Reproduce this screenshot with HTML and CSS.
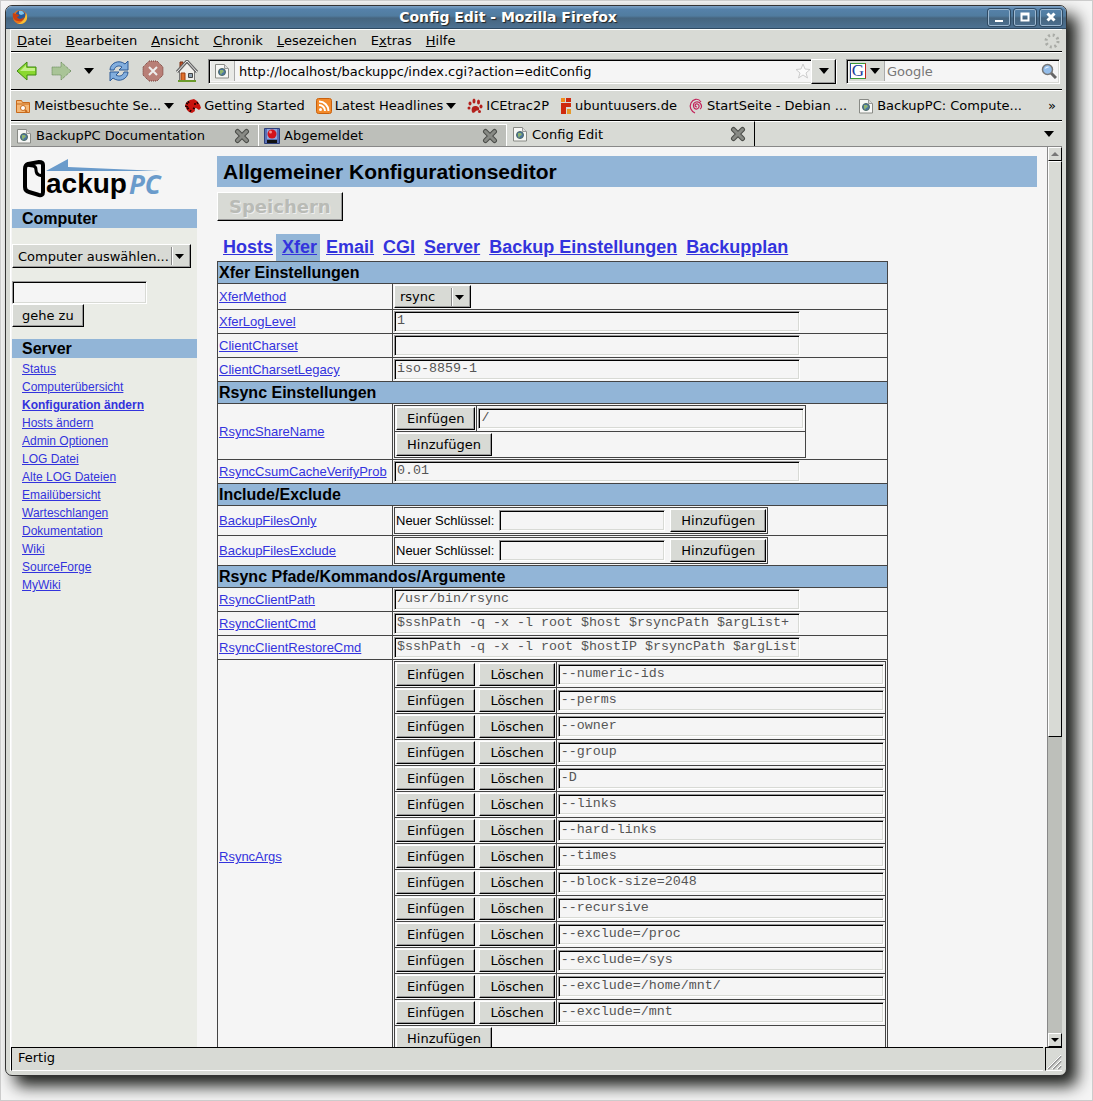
FILE: index.html
```html
<!DOCTYPE html>
<html lang="de">
<head>
  <meta charset="UTF-8">
  <meta name="viewport" content="width=device-width, initial-scale=1.0">
  <title>Config Edit</title>
  <link rel="stylesheet" href="styles.css">
</head>
<body>
  <!-- Shared icons -->
  <svg class="defs" aria-hidden="true">
    <symbol id="page" viewBox="0 0 16 16">
      <path d="M1.500 1.500h9l4 4v9.500h-13z" fill="#f7f7f5" stroke="#888a85"/>
      <path d="M10.500 1.500v4h4" fill="#ddd" stroke="#999"/>
      <circle cx="8" cy="9" r="3.500" fill="#4b75a8" stroke="#4e6b62"/>
      <path d="M6 7l3 0 1 2-2 1-1 2-1-2z" fill="#8fb56e"/>
    </symbol>
    <symbol id="close" viewBox="0 0 16 16">
      <path d="M3.500 3.500l9 9M12.500 3.500l-9 9" stroke="#4b4d49" stroke-width="5" stroke-linecap="round"/>
      <path d="M3.500 3.500l9 9M12.500 3.500l-9 9" stroke="#888a85" stroke-width="3" stroke-linecap="round"/>
    </symbol>
    <symbol id="down" viewBox="0 0 10 6">
      <path d="M0 0h10L5 6z" fill="#000"/>
    </symbol>
  </svg>

  <div class="window">
    <header class="titlebar">
      <svg class="icon" viewBox="0 0 16 16">
        <circle cx="8" cy="8" r="7" fill="#e8731c"/>
        <circle cx="8.500" cy="6.500" r="5" fill="#24599c"/>
        <path d="M7 2c3-1 5 1 5 3l-3 1-2-1z" fill="#7fc4ea"/>
        <path d="M1 4c1 0 2 1 3 1 2 0 3 1 3 2l-2 1c1 2 4 3 7 0 0 3-3 5-6 4C2 12 0 8 1 4z" fill="#c9400f"/>
        <path d="M14 4c1 2 2 5 0 8-2 3-6 4-9 2 4 1 8-3 9-10z" fill="#f8bf35"/>
      </svg>
      <h1>Config Edit - Mozilla Firefox</h1>
      <button class="win-btn" aria-label="Minimieren"><svg viewBox="0 0 16 12"><path d="M4 9h8v2H4z" fill="#fff"/></svg></button>
      <button class="win-btn" aria-label="Maximieren"><svg viewBox="0 0 16 12"><path d="M4.500 2.500h7v7h-7zM4 3.500h8" fill="none" stroke="#fff" stroke-width="2"/></svg></button>
      <button class="win-btn" aria-label="Schließen"><svg viewBox="0 0 16 12"><path d="M4.500 2.500l7 7M11.500 2.500l-7 7" stroke="#fff" stroke-width="3"/></svg></button>
    </header>

    <div class="chrome">
      <nav class="menubar">
        <a href="#"><u>D</u>atei</a>
        <a href="#"><u>B</u>earbeiten</a>
        <a href="#"><u>A</u>nsicht</a>
        <a href="#"><u>C</u>hronik</a>
        <a href="#"><u>L</u>esezeichen</a>
        <a href="#">E<u>x</u>tras</a>
        <a href="#"><u>H</u>ilfe</a>
        <svg class="throbber" viewBox="0 0 16 16"><circle cx="8" cy="8" r="6" fill="none" stroke="#a9aba6" stroke-width="3" stroke-dasharray="2 2.710"/></svg>
      </nav>

      <div class="toolbar">
        <button class="tool" aria-label="Zurück">
          <svg viewBox="0 0 22 22"><path d="M1 11L11 2v5h9v8h-9v5z" fill="#8ad82f" stroke="#3f8a10"/><path d="M4 11l6-6v3h9v3z" fill="#c5f08a"/></svg>
        </button>
        <button class="tool" aria-label="Vor">
          <svg viewBox="0 0 22 22"><path d="M21 11L11 2v5H2v8h9v5z" fill="#a9c497" stroke="#5f8250" stroke-dasharray="1 1"/></svg>
        </button>
        <button class="tool tool-menu" aria-label="Verlauf"><svg class="arrow"><use href="#down"/></svg></button>
        <button class="tool" aria-label="Neu laden">
          <svg viewBox="0 0 22 22">
            <path d="M2 10C2 3 11-1 17 4l3-3v9h-9l3-3C11 5 7 6 6 10z" fill="#82aede" stroke="#2c5a96"/>
            <path d="M20 12c0 7-9 11-15 6l-3 3v-9h9l-3 3c3 2 7 1 8-3z" fill="#82aede" stroke="#2c5a96"/>
          </svg>
        </button>
        <button class="tool" aria-label="Stopp">
          <svg viewBox="0 0 22 22"><path d="M7 1h8l6 6v8l-6 6H7l-6-6V7z" fill="#b87f77" stroke="#703a34" stroke-dasharray="1 1"/><path d="M7 7l8 8M15 7l-8 8" stroke="#eee" stroke-width="2"/></svg>
        </button>
        <button class="tool" aria-label="Startseite">
          <svg viewBox="0 0 22 22">
            <path d="M4 2h3v7H4z" fill="#c0522a" stroke="#7d3518"/>
            <path d="M3.500 11v9.500h15V11L11 3z" fill="#f0efeb" stroke="#777"/>
            <path d="M1 12L11 1l10 11" fill="none" stroke="#666" stroke-width="3"/>
            <path d="M1 12L11 1l10 11" fill="none" stroke="#eee"/>
            <path d="M5 13h4v8H5z" fill="#e0702a" stroke="#9c3d10"/>
            <path d="M12.500 13.500h4v4h-4z" fill="#91a5b5" stroke="#444"/>
            <path d="M2 21h18" stroke="#6b9a2c" stroke-width="2"/>
          </svg>
        </button>
        <div class="urlbar">
          <span class="site-icon"><svg class="icon"><use href="#page"/></svg></span>
          <input type="text" aria-label="Adresse" value="http://localhost/backuppc/index.cgi?action=editConfig">
          <svg class="icon" viewBox="0 0 16 16"><path d="M8 1l2 5 5 .5-4 3.500 1.500 5L8 12l-4.500 3L5 10 1 6.500 6 6z" fill="#fafafa" stroke="#ccc"/></svg>
          <button class="url-drop" aria-label="Adressen anzeigen"><svg class="arrow"><use href="#down"/></svg></button>
        </div>
        <div class="searchbar">
          <button class="engine" aria-label="Suchmaschine">
            <span class="g-logo">G</span>
            <svg class="arrow"><use href="#down"/></svg>
          </button>
          <input type="text" aria-label="Suche" placeholder="Google">
          <svg class="icon" viewBox="0 0 16 16"><path d="M10 10l5 5" stroke="#666" stroke-width="3"/><circle cx="6.500" cy="6.500" r="5" fill="#93bdea" stroke="#777" stroke-width="1.500"/><path d="M3.500 6c1-3 4-3 5-2z" fill="#e6f2ff"/></svg>
        </div>
      </div>

      <nav class="bookmarks">
        <a href="#">
          <svg class="icon" viewBox="0 0 16 16"><path d="M1.500 2.500h5l1 2h7v10h-13z" fill="#f4b877" stroke="#c96a1b"/><path d="M1 6h14" stroke="#c96a1b"/><circle cx="8" cy="10" r="2.500" fill="#fff" stroke="#c96a1b"/><path d="M10 12l2 2" stroke="#c96a1b" stroke-width="2"/></svg>
          Meistbesuchte Se...<svg class="arrow"><use href="#down"/></svg>
        </a>
        <a href="#">
          <svg class="icon" viewBox="0 0 16 16"><path d="M0 7l2-3 3-2 4-1 3 2 3 4 1 3-2 2-3-2h-2l1 3-3 2-3-1-2-2-1-2z" fill="#c8140f"/><path d="M1 5l2 1M3 3l1 2M0 8l3 1M2 11l2-1M5 14l1-2M8 10l2 1M12 4l1 2" stroke="#200" stroke-width="1.500"/><circle cx="10" cy="6" r="1" fill="#200"/></svg>
          Getting Started
        </a>
        <a href="#">
          <svg class="icon" viewBox="0 0 16 16"><rect x=".5" y=".5" width="15" height="15" rx="2" fill="#f28a2b" stroke="#c9600c"/><circle cx="4.500" cy="11.500" r="1.500" fill="#fff"/><path d="M3 7a6 6 0 0 1 6 6M3 3.500a9.500 9.500 0 0 1 9.500 9.500" fill="none" stroke="#fff" stroke-width="2"/></svg>
          Latest Headlines<svg class="arrow"><use href="#down"/></svg>
        </a>
        <a href="#">
          <svg class="icon" viewBox="0 0 16 16" fill="#b3201c"><path d="M5 14c-1-3 0-6 3-6s5 2 4 4c-1 1-2 0-3 1s-3 3-4 1z"/><ellipse cx="2" cy="10" rx="1.500" ry="1.500"/><ellipse cx="3" cy="5.500" rx="1.500" ry="2"/><ellipse cx="7" cy="3" rx="1.500" ry="2.500"/><ellipse cx="11.500" cy="4" rx="1.500" ry="2.500"/><ellipse cx="14" cy="8.500" rx="1.500" ry="2"/><circle cx="12.500" cy="13.500" r="1.500"/></svg>
          ICEtrac2P
        </a>
        <a href="#">
          <svg class="icon narrow" viewBox="0 0 10 16"><path d="M0 0h4v4H0z" fill="#f08c1e"/><path d="M5 0h5v4H5zM0 5h10v4H5v7H0z" fill="#cf2a0e"/><path d="M6 11h4v5H6z" fill="#e59a2c"/></svg>
          ubuntuusers.de
        </a>
        <a href="#">
          <svg class="icon" viewBox="0 0 16 16"><path d="M9 9C6 9 7 5 9.500 6s2 4-.5 5C5 12 4 5 8 4c5-1 7 5 4 7M7 15C3 13 1 9 3 5S10-.5 13 4" fill="none" stroke="#c2235a" stroke-width="1.200"/></svg>
          StartSeite - Debian ...
        </a>
        <a href="#">
          <svg class="icon"><use href="#page"/></svg>
          BackupPC: Compute...
        </a>
        <button class="more" aria-label="Weitere Lesezeichen">»</button>
      </nav>

      <div class="tabs">
        <div class="tab">
          <svg class="icon"><use href="#page"/></svg>
          <span>BackupPC Documentation</span>
          <button aria-label="Tab schließen"><svg class="icon"><use href="#close"/></svg></button>
        </div>
        <div class="tab">
          <svg class="icon" viewBox="0 0 16 16"><path d="M.5.5h15v15H.5z" fill="#5a70b5" stroke="#2c3e7a"/><path d="M3 1h10v10H3z" fill="#8fa5dc"/><circle cx="8" cy="6" r="4.500" fill="#d3121b"/><circle cx="6.500" cy="4" r="1.500" fill="#f5888a"/><path d="M3 12h10v3H3z" fill="#111"/></svg>
          <span>Abgemeldet</span>
          <button aria-label="Tab schließen"><svg class="icon"><use href="#close"/></svg></button>
        </div>
        <div class="tab active">
          <svg class="icon"><use href="#page"/></svg>
          <span>Config Edit</span>
          <button aria-label="Tab schließen"><svg class="icon"><use href="#close"/></svg></button>
        </div>
        <button class="all-tabs" aria-label="Alle Tabs"><svg class="arrow"><use href="#down"/></svg></button>
      </div>

      <div class="viewport">
        <aside class="sidebar">
          <a class="logo" href="#" aria-label="BackupPC">
            <svg viewBox="0 0 142 42">
              <path d="M24 12L46 0v8l92 4z" fill="#6a9bcb"/>
              <path d="M3 10q0-4 3-5l11-2q4 0 4 3v27q0 4-4 3l-10-3q-4-1-4-5z" fill="none" stroke="#000" stroke-width="4" stroke-linejoin="round"/>
              <path d="M4 6l7 1q3 0 3 4t3 5l4 1" fill="none" stroke="#000" stroke-width="3"/>
              <text class="logo-ackup" x="24" y="34">ackup</text>
              <text class="logo-pc" x="107" y="35">PC</text>
            </svg>
          </a>
          <h2>Computer</h2>
          <form class="host-form">
            <select aria-label="Computer auswählen">
              <option>Computer auswählen...</option>
            </select>
            <input type="text" aria-label="Computername">
            <button type="button" class="btn">gehe zu</button>
          </form>
          <h2>Server</h2>
          <nav class="links">
            <a href="#">Status</a>
            <a href="#">Computerübersicht</a>
            <a href="#" class="current">Konfiguration ändern</a>
            <a href="#">Hosts ändern</a>
            <a href="#">Admin Optionen</a>
            <a href="#">LOG Datei</a>
            <a href="#">Alte LOG Dateien</a>
            <a href="#">Emailübersicht</a>
            <a href="#">Warteschlangen</a>
            <a href="#">Dokumentation</a>
            <a href="#">Wiki</a>
            <a href="#">SourceForge</a>
            <a href="#">MyWiki</a>
          </nav>
        </aside>

        <main class="content">
          <h2 class="page-title">Allgemeiner Konfigurationseditor</h2>
          <button type="button" class="btn save" disabled>Speichern</button>
          <nav class="sections">
            <a href="#">Hosts</a>
            <a href="#" class="selected">Xfer</a>
            <a href="#">Email</a>
            <a href="#">CGI</a>
            <a href="#">Server</a>
            <a href="#">Backup Einstellungen</a>
            <a href="#">Backupplan</a>
          </nav>

          <table class="config">
            <colgroup><col class="names"><col></colgroup>
            <tr><th colspan="2">Xfer Einstellungen</th></tr>
            <tr>
              <td><a href="#">XferMethod</a></td>
              <td><select class="method" aria-label="XferMethod"><option>rsync</option></select></td>
            </tr>
            <tr><td><a href="#">XferLogLevel</a></td><td><input type="text" aria-label="XferLogLevel" value="1"></td></tr>
            <tr><td><a href="#">ClientCharset</a></td><td><input type="text" aria-label="ClientCharset"></td></tr>
            <tr><td><a href="#">ClientCharsetLegacy</a></td><td><input type="text" aria-label="ClientCharsetLegacy" value="iso-8859-1"></td></tr>

            <tr><th colspan="2">Rsync Einstellungen</th></tr>
            <tr>
              <td><a href="#">RsyncShareName</a></td>
              <td>
                <table class="list">
                  <tr><td><button type="button" class="btn">Einfügen</button></td><td><input type="text" aria-label="RsyncShareName 1" value="/"></td></tr>
                  <tr><td colspan="2"><button type="button" class="btn">Hinzufügen</button></td></tr>
                </table>
              </td>
            </tr>
            <tr><td><a href="#">RsyncCsumCacheVerifyProb</a></td><td><input type="text" aria-label="RsyncCsumCacheVerifyProb" value="0.01"></td></tr>

            <tr><th colspan="2">Include/Exclude</th></tr>
            <tr>
              <td><a href="#">BackupFilesOnly</a></td>
              <td>
                <div class="new-key">
                  <label for="only">Neuer Schlüssel:</label>
                  <input type="text" id="only">
                  <button type="button" class="btn">Hinzufügen</button>
                </div>
              </td>
            </tr>
            <tr>
              <td><a href="#">BackupFilesExclude</a></td>
              <td>
                <div class="new-key">
                  <label for="exclude">Neuer Schlüssel:</label>
                  <input type="text" id="exclude">
                  <button type="button" class="btn">Hinzufügen</button>
                </div>
              </td>
            </tr>

            <tr><th colspan="2">Rsync Pfade/Kommandos/Argumente</th></tr>
            <tr><td><a href="#">RsyncClientPath</a></td><td><input type="text" aria-label="RsyncClientPath" value="/usr/bin/rsync"></td></tr>
            <tr><td><a href="#">RsyncClientCmd</a></td><td><input type="text" aria-label="RsyncClientCmd" value="$sshPath -q -x -l root $host $rsyncPath $argList+"></td></tr>
            <tr><td><a href="#">RsyncClientRestoreCmd</a></td><td><input type="text" aria-label="RsyncClientRestoreCmd" value="$sshPath -q -x -l root $hostIP $rsyncPath $argList"></td></tr>
            <tr>
              <td><a href="#">RsyncArgs</a></td>
              <td>
                <table class="list">
                  <tr><td><button type="button" class="btn">Einfügen</button><button type="button" class="btn">Löschen</button></td><td><input type="text" aria-label="RsyncArgs 1" value="--numeric-ids"></td></tr>
                  <tr><td><button type="button" class="btn">Einfügen</button><button type="button" class="btn">Löschen</button></td><td><input type="text" aria-label="RsyncArgs 2" value="--perms"></td></tr>
                  <tr><td><button type="button" class="btn">Einfügen</button><button type="button" class="btn">Löschen</button></td><td><input type="text" aria-label="RsyncArgs 3" value="--owner"></td></tr>
                  <tr><td><button type="button" class="btn">Einfügen</button><button type="button" class="btn">Löschen</button></td><td><input type="text" aria-label="RsyncArgs 4" value="--group"></td></tr>
                  <tr><td><button type="button" class="btn">Einfügen</button><button type="button" class="btn">Löschen</button></td><td><input type="text" aria-label="RsyncArgs 5" value="-D"></td></tr>
                  <tr><td><button type="button" class="btn">Einfügen</button><button type="button" class="btn">Löschen</button></td><td><input type="text" aria-label="RsyncArgs 6" value="--links"></td></tr>
                  <tr><td><button type="button" class="btn">Einfügen</button><button type="button" class="btn">Löschen</button></td><td><input type="text" aria-label="RsyncArgs 7" value="--hard-links"></td></tr>
                  <tr><td><button type="button" class="btn">Einfügen</button><button type="button" class="btn">Löschen</button></td><td><input type="text" aria-label="RsyncArgs 8" value="--times"></td></tr>
                  <tr><td><button type="button" class="btn">Einfügen</button><button type="button" class="btn">Löschen</button></td><td><input type="text" aria-label="RsyncArgs 9" value="--block-size=2048"></td></tr>
                  <tr><td><button type="button" class="btn">Einfügen</button><button type="button" class="btn">Löschen</button></td><td><input type="text" aria-label="RsyncArgs 10" value="--recursive"></td></tr>
                  <tr><td><button type="button" class="btn">Einfügen</button><button type="button" class="btn">Löschen</button></td><td><input type="text" aria-label="RsyncArgs 11" value="--exclude=/proc"></td></tr>
                  <tr><td><button type="button" class="btn">Einfügen</button><button type="button" class="btn">Löschen</button></td><td><input type="text" aria-label="RsyncArgs 12" value="--exclude=/sys"></td></tr>
                  <tr><td><button type="button" class="btn">Einfügen</button><button type="button" class="btn">Löschen</button></td><td><input type="text" aria-label="RsyncArgs 13" value="--exclude=/home/mnt/"></td></tr>
                  <tr><td><button type="button" class="btn">Einfügen</button><button type="button" class="btn">Löschen</button></td><td><input type="text" aria-label="RsyncArgs 14" value="--exclude=/mnt"></td></tr>
                  <tr><td colspan="2"><button type="button" class="btn">Hinzufügen</button></td></tr>
                </table>
              </td>
            </tr>
          </table>
        </main>

        <div class="scrollbar">
          <button class="scroll-btn" aria-label="Nach oben" disabled><svg viewBox="0 0 8 4"><path d="M0 4h8L4 0z" fill="#777"/></svg></button>
          <div class="track"><div class="thumb"></div></div>
          <button class="scroll-btn" aria-label="Nach unten"><svg viewBox="0 0 8 4"><path d="M0 0h8L4 4z"/></svg></button>
        </div>
      </div>

      <footer class="statusbar">
        <span class="status">Fertig</span>
        <span class="grip"><svg viewBox="0 0 16 16"><path d="M2 15L15 2M7 15l8-8M12 15l3-3" stroke="#999" stroke-width="2"/><path d="M1 15L15 1M6 15l9-9M11 15l4-4" stroke="#fff"/></svg></span>
      </footer>
    </div>
  </div>
</body>
</html>
```

FILE: styles.css
```css
* {
  box-sizing: border-box;
}
body {
  height: 100vh;
  margin: 0;
  padding: 4px 25px 24px 4px;
  border: 1px solid #ccc;
  background: #f5f5f5;
  font-family: "DejaVu Sans", sans-serif;
  font-size: 13px;
  color: #000;
  overflow: hidden;
}
button,
select,
.urlbar input,
.searchbar input {
  font-family: "DejaVu Sans", sans-serif;
  font-size: 13px;
  color: #000;
}
button {
  padding: 0;
  border: none;
  background: none;
}
svg {
  display: block;
  flex: none;
}
.defs {
  position: absolute;
  width: 0;
  height: 0;
}
.icon {
  width: 16px;
  height: 16px;
}
.narrow {
  width: 12px;
}
.arrow {
  width: 10px;
  height: 6px;
}

/* Window frame */
.window {
  display: flex;
  flex-direction: column;
  height: 100%;
  border: 1px solid #333;
  border-radius: 7px;
  background: #d8dad5;
  box-shadow: 10px 10px 16px #1c1e1b;
}
.titlebar {
  display: flex;
  align-items: center;
  gap: 4px;
  flex: none;
  height: 23px;
  padding: 0 4px 0 6px;
  border-bottom: 1px solid #2f4a63;
  border-radius: 6px 6px 0 0;
  background: linear-gradient(#7fa3c6, #5581a9 15%, #517c9f 45%, #46657f 55%, #4d7192);
}
.titlebar h1 {
  flex: 1;
  margin: 0;
  font-size: 14px;
  line-height: 20px;
  text-align: center;
  color: #fff;
  text-shadow: 1px 1px 1px #222;
}
.win-btn {
  width: 22px;
  height: 17px;
  border: 1px solid #9db8d0;
  border-radius: 2px;
  outline: 1px solid #2f4a63;
}
.win-btn svg {
  width: 16px;
  height: 12px;
  margin: auto;
}
.chrome {
  display: flex;
  flex-direction: column;
  flex: 1;
  min-height: 0;
  margin: 0 4px 4px;
  border-left: 1px solid #fff;
}

/* Menu, toolbar, bookmarks */
.menubar,
.toolbar,
.bookmarks {
  display: flex;
  align-items: center;
  flex: none;
  border-top: 1px solid #fff;
  border-bottom: 1px solid #000;
}
.menubar a,
.bookmarks a {
  color: #000;
  text-decoration: none;
}
.menubar {
  gap: 14px;
  height: 23px;
  padding: 0 2px 0 6px;
}
.throbber {
  width: 16px;
  height: 16px;
  margin-left: auto;
}
.toolbar {
  gap: 12px;
  height: 38px;
  padding: 0 2px 0 5px;
}
.tool {
  flex: none;
  width: 22px;
}
.tool svg:not(.arrow) {
  width: 22px;
  height: 22px;
}
.tool-menu {
  width: 12px;
}
.urlbar,
.searchbar {
  display: flex;
  align-items: center;
  height: 25px;
  background: #f5f5f5;
  border: 1px solid;
  border-color: #888 #fff #fff #888;
  box-shadow: inset 1px 1px #000, inset -1px -1px #d8dad5;
}
.urlbar {
  flex: 1;
  margin-left: -2px;
  padding: 0 0 0 2px;
}
.urlbar input,
.searchbar input {
  flex: 1;
  min-width: 0;
  padding: 0 4px;
  border: none;
  background: none;
}
.site-icon {
  display: flex;
  align-items: center;
  width: 24px;
  height: 20px;
  padding-left: 3px;
  border-right: 1px solid #aaa;
  background: #e9eae7;
}
.url-drop {
  display: flex;
  align-items: center;
  justify-content: center;
  width: 25px;
  height: 25px;
  background: #d8dad5;
  border: 1px solid;
  border-color: #fff #000 #000 #fff;
  box-shadow: inset -1px -1px #999;
}
.searchbar {
  width: 214px;
  margin-left: -3px;
  padding: 0 2px;
}
.searchbar input {
  padding-left: 2px;
}
.searchbar input::placeholder {
  color: #777;
  opacity: 1;
}
.engine {
  display: flex;
  align-items: center;
  gap: 4px;
  height: 20px;
  padding: 0 4px 0 1px;
  background: #d8dad5;
  border-right: 1px solid #aaa;
}
.g-logo {
  width: 16px;
  height: 16px;
  border: 1px solid;
  border-color: #3a9b35 #c3231c #3a9b35 #2a4bb0;
  background: #fff;
  font-family: "Liberation Serif", serif;
  font-size: 17px;
  line-height: 14px;
  color: #1a3c9c;
}
.bookmarks {
  gap: 11px;
  height: 31px;
  padding: 0 6px 0 4px;
}
.bookmarks a {
  display: flex;
  align-items: center;
  gap: 3px;
  white-space: nowrap;
}
.more {
  margin-left: auto;
}

/* Browser tabs */
.tabs {
  display: flex;
  align-items: flex-end;
  flex: none;
  height: 26px;
  border-top: 1px solid #fff;
  border-bottom: 1px solid #888;
}
.tab {
  display: flex;
  align-items: center;
  gap: 4px;
  width: 248px;
  height: 22px;
  padding: 0 8px 0 5px;
  border-top: 1px solid #fff;
  border-right: 1px solid #fff;
  background: #bdbfba;
}
.tab span {
  flex: 1;
}
.tab.active {
  height: 25px;
  border-right: 1px solid #000;
  background: #d8dad5;
}
.all-tabs {
  align-self: center;
  margin: 0 8px 0 auto;
}

/* Page */
.viewport {
  display: flex;
  flex: 1;
  min-height: 0;
  overflow: hidden;
  background: #f5f5f5;
  font-family: "Liberation Sans", Arial, sans-serif;
}
.sidebar {
  flex: none;
  width: 185px;
  margin-left: 1px;
  background: #eaece6;
}
.logo {
  display: block;
  height: 62px;
  padding: 12px 0 0 10px;
  background: #f5f5f5;
}
.logo svg {
  width: 142px;
  height: 42px;
}
.logo-ackup {
  font-family: "Liberation Sans", Arial, sans-serif;
  font-size: 28px;
  font-weight: bold;
}
.logo-pc {
  font-family: "Noto Sans", sans-serif;
  font-size: 26px;
  font-style: italic;
  font-weight: bold;
  fill: #6a9bcb;
}
.sidebar h2 {
  height: 19px;
  margin: 0;
  padding-left: 10px;
  background: #92b5d7;
  font-size: 16px;
  line-height: 19px;
}
.host-form {
  display: flex;
  flex-direction: column;
  align-items: flex-start;
  padding: 16px 0 12px;
}
.host-form select {
  width: 179px;
  margin-bottom: 13px;
}
.host-form .btn {
  padding: 0 9px;
}
.links {
  display: flex;
  flex-direction: column;
  align-items: flex-start;
  padding: 2px 10px;
  font-size: 12px;
  line-height: 18px;
}
.links .current {
  font-weight: bold;
}
.viewport a {
  color: #3333dd;
}

/* Form controls */
.btn,
.viewport select {
  height: 23px;
  padding: 0 10px;
  border: 1px solid;
  border-color: #fff #000 #000 #fff;
  border-radius: 0;
  background: #d8dad5;
  box-shadow: inset -1px -1px #999;
}
.viewport select {
  appearance: none;
  padding: 0 5px;
  background: #d8dad5 url("data:image/svg+xml,%3Csvg xmlns='http://www.w3.org/2000/svg' width='20' height='18'%3E%3Cpath d='M1.500 0v18' stroke='%23888'/%3E%3Cpath d='M2.500 0v18' stroke='%23fff'/%3E%3Cpath d='M5 7h9l-4.500 5z'/%3E%3C/svg%3E") no-repeat right center;
}
.viewport input {
  height: 21px;
  padding: 0 2px 2px;
  border: 1px solid;
  border-color: #999 #fff #fff #999;
  background: #f5f5f5;
  box-shadow: inset 1px 1px #000, inset -1px -1px #d8dad5;
  font-family: "Liberation Mono", monospace;
  color: #555;
}
.viewport .host-form input {
  width: 135px;
  height: 23px;
}
.viewport .host-form select {
  height: 24px;
}

.content {
  flex: 1;
  min-width: 0;
  padding: 9px 10px 0 20px;
}
.page-title {
  height: 31px;
  margin: 0 0 5px;
  padding-left: 6px;
  background: #92b5d7;
  font-size: 21px;
  line-height: 31px;
}
.content .save {
  display: block;
  height: 29px;
  padding: 0 11px;
  font-size: 18px;
  font-weight: bold;
  color: #b9bbb6;
  text-shadow: 1px 1px #eee;
}
.sections {
  display: flex;
  padding-top: 13px;
  font-size: 18px;
  font-weight: bold;
  line-height: 27px;
}
.sections a {
  padding: 0 3px 0 6px;
}
.sections .selected {
  background: #92b5d7;
}

table {
  border-collapse: collapse;
}
.config {
  font-size: 13px;
}
.names {
  width: 175px;
}
.config td,
.config th {
  padding: 1px;
  border: 1px solid #444;
}
.config th {
  height: 22px;
  padding: 0 1px;
  background: #92b5d7;
  font-size: 16px;
  line-height: 18px;
  text-align: left;
}
.config input,
.config select,
.config .btn {
  display: block;
}
.config input {
  width: 406px;
}
.config .method {
  width: 77px;
}
.config .list input {
  width: 326px;
}
.list td {
  height: 26px;
}
.list .btn {
  display: inline-block;
  vertical-align: top;
}
.list .btn + .btn {
  margin-left: 4px;
}
.new-key {
  display: flex;
  align-items: center;
  gap: 5px;
  width: fit-content;
  height: 27px;
  padding: 0 1px;
  border: 1px solid #444;
}
.config .new-key input {
  width: 166px;
}

/* Scrollbar and status bar */
.scrollbar {
  display: flex;
  flex-direction: column;
  flex: none;
  width: 15px;
  border-left: 1px solid #888;
  background: #bdbfba;
}
.scroll-btn,
.thumb {
  background: #d8dad5;
  border: 1px solid;
  border-color: #fff #000 #000 #fff;
}
.scroll-btn {
  height: 14px;
}
.scroll-btn svg {
  width: 8px;
  height: 4px;
  margin: auto;
}
.track {
  flex: 1;
}
.thumb {
  height: 66%;
}
.statusbar {
  display: flex;
  gap: 2px;
  flex: none;
  height: 24px;
}
.status,
.grip {
  border-top: 1px solid #000;
  border-left: 1px solid #000;
  border-bottom: 1px solid #fff;
}
.status {
  flex: 1;
  padding-left: 6px;
  line-height: 20px;
}
.grip {
  display: flex;
  align-items: flex-end;
  width: 17px;
}
```
